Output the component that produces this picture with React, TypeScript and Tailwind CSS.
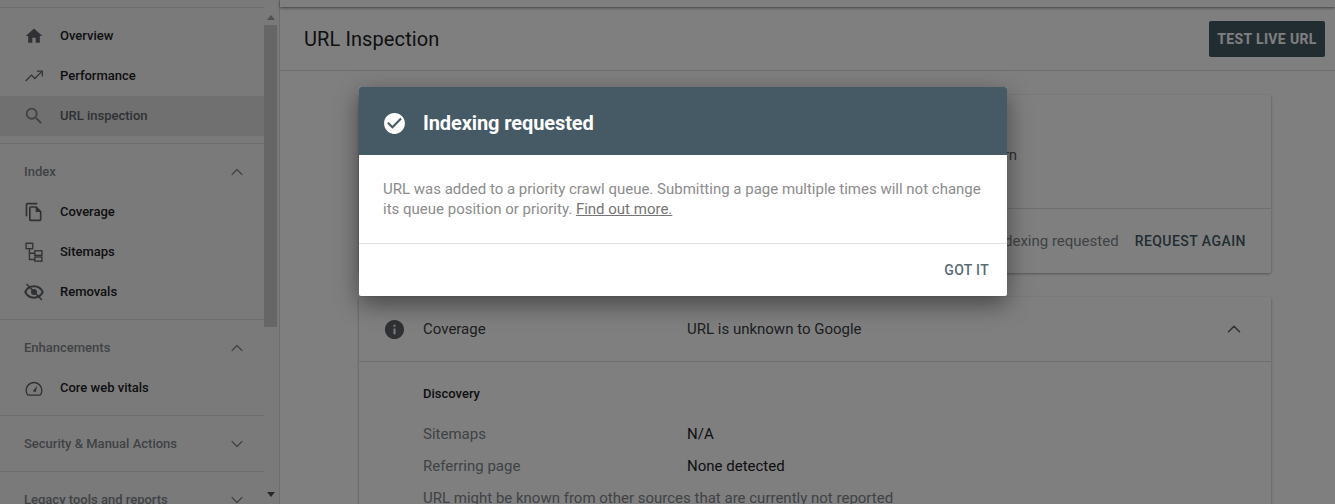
import type { ReactNode } from 'react';
import { ChevronDown, ChevronUp } from 'lucide-react';
import { MdCheckCircle, MdHome, MdInfo, MdOutlineFileCopy, MdSearch } from 'react-icons/md';

function TrendIcon() {
  return (
    <svg viewBox="0 0 24 24" className="w-5 h-5" fill="none" stroke="currentColor" strokeWidth="1.5">
      <path d="M2 18l7-7 4 4 8.5-8.5" />
      <path d="M15.5 6h6.5v6.5" />
    </svg>
  );
}

function SitemapIcon() {
  return (
    <svg viewBox="0 0 24 24" className="w-5 h-5" fill="none" stroke="currentColor" strokeWidth="1.6">
      <rect x="2.5" y="1.5" width="8" height="6.5" />
      <rect x="13" y="10.5" width="8.5" height="5.5" />
      <rect x="13" y="18" width="8.5" height="5" />
      <path d="M6.5 8v13h6.5M6.5 13.5h6.5" />
    </svg>
  );
}

function EyeOffIcon() {
  return (
    <svg viewBox="0 0 24 24" className="w-5 h-5" fill="none" stroke="currentColor">
      <path d="M1.5 12C3.5 7.8 7.4 5.2 12 5.2s8.5 2.6 10.5 6.8c-2 4.2-5.9 6.8-10.5 6.8S3.5 16.2 1.5 12z" strokeWidth="2.4" />
      <circle cx="12" cy="12" r="3.6" fill="currentColor" stroke="none" />
      <path d="M3 2.5L21.5 21.5" strokeWidth="1.8" />
    </svg>
  );
}

function GaugeIcon() {
  return (
    <svg viewBox="0 0 24 24" className="w-5 h-5" fill="none" stroke="currentColor" strokeWidth="1.6">
      <path d="M5.5 20.5h13a1.8 1.8 0 0 0 1.6-.9A9.4 9.4 0 1 0 3.9 19.6a1.8 1.8 0 0 0 1.6.9z" />
      <path d="M11 15.6l4.4-5.4-1.7 6.6z" fill="currentColor" strokeWidth="0.6" />
    </svg>
  );
}

function NavItem({ icon, label, active }: { icon: ReactNode; label: string; active?: boolean }) {
  return (
    <div className={`h-10 flex items-center pl-6 text-[13px] font-medium ${active ? 'bg-[#e0e0e0] text-[#5f6368]' : 'text-[#202124]'}`}>
      <span className={`w-9 text-[20px] flex ${active ? 'text-[#80868b]' : 'text-[#5f6368]'}`}>{icon}</span>
      {label}
    </div>
  );
}

function GroupHeader({ label, open }: { label: string; open?: boolean }) {
  return (
    <div className="h-12 pt-2 flex items-center justify-between pl-6 pr-[17px] text-[13px] font-medium text-[#80868b]">
      {label}
      {open ? <ChevronUp size={20} strokeWidth={1.5} /> : <ChevronDown size={20} strokeWidth={1.5} />}
    </div>
  );
}

function Sidebar() {
  return (
    <aside className="w-[280px] shrink-0 h-full flex bg-[#f5f5f5] border-r border-[#dadce0] overflow-hidden">
      <div className="w-[264px] shrink-0">
        <div className="h-2 border-b border-[#dadce0]" />
        <div className="pt-2">
          <NavItem icon={<MdHome />} label="Overview" />
          <NavItem icon={<TrendIcon />} label="Performance" />
          <NavItem icon={<MdSearch className="w-[22px] h-[22px] -ml-[1px]" />} label="URL inspection" active />
        </div>
        <div className="mt-[7px] border-t border-[#dadce0] pb-[7px]">
          <GroupHeader label="Index" open />
          <NavItem icon={<MdOutlineFileCopy />} label="Coverage" />
          <NavItem icon={<SitemapIcon />} label="Sitemaps" />
          <NavItem icon={<EyeOffIcon />} label="Removals" />
        </div>
        <div className="border-t border-[#dadce0] pb-[7px]">
          <GroupHeader label="Enhancements" open />
          <NavItem icon={<GaugeIcon />} label="Core web vitals" />
        </div>
        <div className="border-t border-[#dadce0] pb-[7px]">
          <GroupHeader label="Security & Manual Actions" />
        </div>
        <div className="border-t border-[#dadce0] pb-[7px]">
          <GroupHeader label="Legacy tools and reports" />
        </div>
      </div>
      {/* scrollbar */}
      <div className="w-[15px] shrink-0 flex flex-col pt-2 pb-[3px] justify-between">
        <div className="w-[13px] flex flex-col items-center">
          <svg viewBox="0 0 8 5" className="w-2 h-[5px] mt-[7px] text-[#a3a3a3]" fill="currentColor"><path d="M4 0l4 5H0z" /></svg>
          <div className="w-full h-[302px] mt-[5px] bg-[#cdcdcd]" />
        </div>
        <div className="w-[13px] flex justify-center">
          <svg viewBox="0 0 8 5" className="w-2 h-[5px] mb-1 text-[#505050]" fill="currentColor"><path d="M0 0h8L4 5z" /></svg>
        </div>
      </div>
    </aside>
  );
}

function DetailRow({ label, value }: { label: string; value?: string }) {
  return (
    <div className="h-8 flex items-center text-[15px]">
      <span className={value ? 'w-[264px] text-[#80868b]' : 'whitespace-nowrap text-[#80868b]'}>{label}</span>
      {value && <span className="text-[#202124]">{value}</span>}
    </div>
  );
}

function Main() {
  return (
    <main className="flex-1 min-w-0 h-full bg-white">
      <div className="h-[7px] shadow-[0_1px_3px_rgba(0,0,0,0.5)]" />
      <header className="h-[64px] flex items-center justify-between pl-6 pr-[10px] border-b border-[#dadce0]">
        <h1 className="text-[20px] text-[#202124] tracking-[0.1px]">URL Inspection</h1>
        <button className="w-[116px] h-9 rounded-[2px] bg-[#455a64] text-white text-sm font-bold tracking-[0.35px]">TEST LIVE URL</button>
      </header>

      <div className="ml-[79px] w-[912px] pt-6">
        <section className="h-[178px] rounded-[2px] bg-white shadow-[0_1px_3px_rgba(0,0,0,0.35)]">
          <div className="h-[114px] border-b border-[#dadce0] flex items-center justify-end pr-[254px] pt-[7px] text-[15px] text-[#5f6368]">
            Learn
          </div>
          <div className="h-[64px] flex items-center justify-end pr-[25px]">
            <span className="text-[15px] text-[#80868b] mr-4">Indexing requested</span>
            <span className="text-sm font-medium text-[#455a64] tracking-[0.45px]">REQUEST AGAIN</span>
          </div>
        </section>

        <section className="mt-6 h-[300px] rounded-[2px] bg-white shadow-[0_1px_3px_rgba(0,0,0,0.35)]">
          <div className="h-[65px] flex items-center pl-[24px] pr-[26px] border-b border-[#dadce0] text-[15px] text-[#3c4043]">
            <span className="w-[40px] text-[23px] text-[#5f6368] flex"><MdInfo /></span>
            <span className="w-[264px]">Coverage</span>
            <span className="flex-1">URL is unknown to Google</span>
            <ChevronUp size={22} strokeWidth={1.75} className="text-[#5f6368]" />
          </div>
          <div className="pl-[64px] pt-[22px]">
            <p className="h-5 text-[13px] font-medium text-[#202124] leading-5">Discovery</p>
            <div className="pt-[14px]">
              <DetailRow label="Sitemaps" value="N/A" />
              <DetailRow label="Referring page" value="None detected" />
              <DetailRow label="URL might be known from other sources that are currently not reported" />
            </div>
          </div>
        </section>
      </div>
    </main>
  );
}

export default function App() {
  return (
    <div className="relative w-[1335px] h-[504px] overflow-hidden flex bg-white font-['Roboto',sans-serif]">
      <Sidebar />
      <Main />

      {/* scrim + dialog */}
      <div className="absolute inset-0 bg-black/50 pl-[359px] pt-[87px]">
        <div className="w-[648px] rounded-[2px] bg-white overflow-hidden shadow-[0_8px_24px_rgba(0,0,0,0.45)]">
          <div className="h-[68px] bg-[#455a64] flex items-center pl-[23px] pt-1 text-white">
            <span className="w-[41px] text-[25px] flex"><MdCheckCircle /></span>
            <h2 className="text-[20px] font-bold tracking-[-0.1px]">Indexing requested</h2>
          </div>
          <p className="h-[88px] pl-6 pr-5 pt-[24px] text-[15px] leading-5 text-[#8c8c8c]">
            URL was added to a priority crawl queue. Submitting a page multiple times will not change its queue position or priority. <a className="underline text-[#757575]">Find out more.</a>
          </p>
          <div className="h-[53px] border-t border-[#e0e0e0] flex items-center justify-end pr-[18px]">
            <button className="text-sm font-medium text-[#5a6b74] tracking-[0.3px]">GOT IT</button>
          </div>
        </div>
      </div>
    </div>
  );
}
